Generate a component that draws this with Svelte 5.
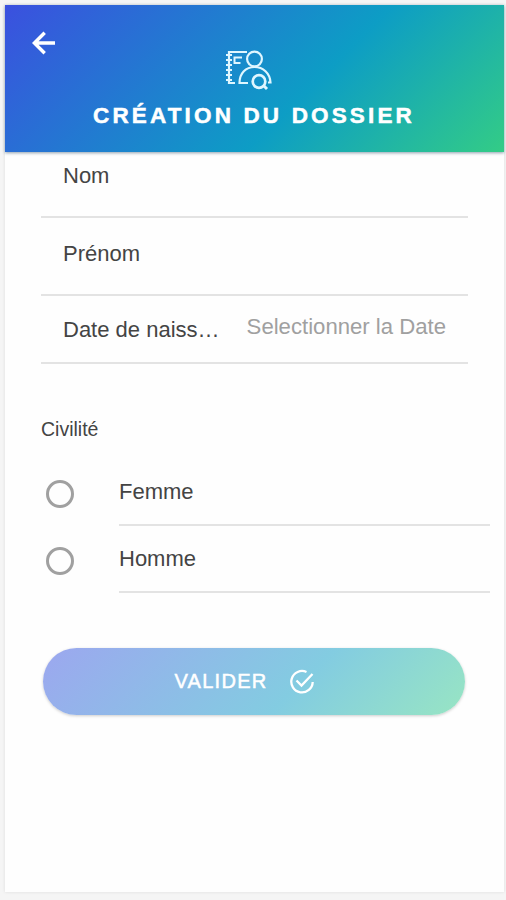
<script>
    let lastName = $state('');
    let firstName = $state('');
    let gender = $state('');

    const genders = ['Femme', 'Homme'];
</script>

<main class="screen">
    <header>
        <button class="back" aria-label="Retour">
            <svg width="24" height="24" viewBox="0 0 24 24" fill="none" stroke="#fff" stroke-width="3.4">
                <path d="M12.7 1.7 2.4 12l10.3 10.3M2.6 12H23" />
            </svg>
        </button>
        <svg class="logo" width="48" height="42" viewBox="0 0 48 42" fill="none" stroke="#dff6ff" stroke-width="2.2">
            <path d="M22 3H4v31h6M15 34h8" />
            <path d="M1 6h6M1 11h6M1 16h6M1 21h6M1 26h6M1 31h6" stroke-width="2" />
            <path d="M17 8.500H9.500v5.500h6" stroke-width="2" />
            <circle cx="29.500" cy="10" r="7.400" />
            <path d="M21 34h-6.500C14.500 24 21 18 29.500 18S45 24 45.500 33.500H43" />
            <circle cx="34" cy="32.500" r="6.300" stroke-width="2.700" />
            <path d="m38 36 4 4" stroke-width="3" />
        </svg>
        <h1>CRÉATION DU DOSSIER</h1>
    </header>

    <form>
        <label class="field name">
            <span>Nom</span>
            <input type="text" bind:value={lastName} />
        </label>
        <label class="field first">
            <span>Prénom</span>
            <input type="text" bind:value={firstName} />
        </label>
        <div class="field date">
            <span>Date de naiss…</span>
            <span class="placeholder">Selectionner la Date</span>
        </div>

        <h2>Civilité</h2>
        {#each genders as item}
            <label class="option">
                <input type="radio" name="gender" value={item} bind:group={gender} />
                <span>{item}</span>
            </label>
        {/each}

        <button class="submit" type="button">
            <span>VALIDER</span>
            <svg width="26" height="26" viewBox="0 0 26 26" fill="none" stroke="#fff" stroke-width="2.300">
                <path d="M17.500 3A10.700 10.700 0 1 0 23.700 13" />
                <path d="m7.500 11.500 5 5L23.500 5" />
            </svg>
        </button>
    </form>
</main>

<style>
    :global(body) { background: #f5f5f5; }
    .screen {
        box-sizing: border-box;
        width: 499px;
        height: 887px;
        margin: 0 2px 8px 5px;
        background: #fefefe;
        box-shadow: 0 0 3px #ddd;
        font-family: "Liberation Sans", Arial, sans-serif;
        font-size: 22px;
        color: #444;
    }
    :global(#app) { padding-top: 5px; }
    header {
        box-sizing: border-box;
        position: relative;
        display: flex;
        flex-direction: column;
        align-items: center;
        height: 147px;
        padding-top: 44px;
        background: linear-gradient(135deg, #3b50df 0%, #0d9dc5 60%, #33cc86 100%);
        box-shadow: 0 1px 3px #8e9fae;
    }
    button { border: 0; padding: 0; font-family: inherit; cursor: pointer; }
    .back { position: absolute; left: 27px; top: 26px; height: 24px; background: none; }
    .logo { margin-right: 12px; }
    svg { display: block; }
    h1 {
        margin: 12px 0 0;
        padding-right: 1px;
        font-size: 22.500px;
        line-height: 26px;
        letter-spacing: 3.150px;
        color: #fff;
        white-space: nowrap;
        -webkit-text-stroke: 0.500px #fff;
    }
    form { padding-left: 36px; }
    .field {
        box-sizing: border-box;
        display: flex;
        width: 427px;
        padding: 0 22px;
        line-height: 26px;
        border-bottom: 2px solid #e3e3e3;
    }
    .field input { flex: 1; min-width: 0; height: 26px; border: 0; padding: 0 0 0 16px; background: none; outline: none; font: inherit; }
    .name { height: 66px; padding-top: 11px; }
    .first { height: 78px; padding-top: 23px; }
    .date { height: 68px; padding-top: 21px; justify-content: space-between; white-space: nowrap; }
    .placeholder { margin-top: -3px; color: #a0a0a0; font-size: 22.150px; }
    h2 { margin: 53px 0 18px; font-size: 19.500px; line-height: 24px; font-weight: normal; }
    .option { display: flex; align-items: center; height: 67px; padding-left: 5px; }
    .option input {
        appearance: none;
        box-sizing: border-box;
        width: 28px;
        height: 28px;
        margin: 3px 45px 0 0;
        border: 3px solid #a0a0a0;
        border-radius: 50%;
    }
    .option input:checked { background: radial-gradient(#3b50df 40%, transparent 45%); }
    .option span {
        box-sizing: border-box;
        width: 371px;
        height: 67px;
        padding-top: 20px;
        line-height: 26px;
        border-bottom: 2px solid #e3e3e3;
    }
    .submit {
        box-sizing: border-box;
        display: flex;
        align-items: center;
        justify-content: center;
        gap: 21px;
        width: 422px;
        height: 67px;
        margin: 55px 0 0 2px;
        padding-right: 19px;
        border-radius: 34px;
        background: linear-gradient(135deg, #9ca7ef 0%, #83cce1 60%, #98e5c3 100%);
        box-shadow: 0 1px 3px #ccc;
        color: #fff;
        font-size: 20px;
        letter-spacing: 1.300px;
        -webkit-text-stroke: 0.500px #fff;
    }
</style>
